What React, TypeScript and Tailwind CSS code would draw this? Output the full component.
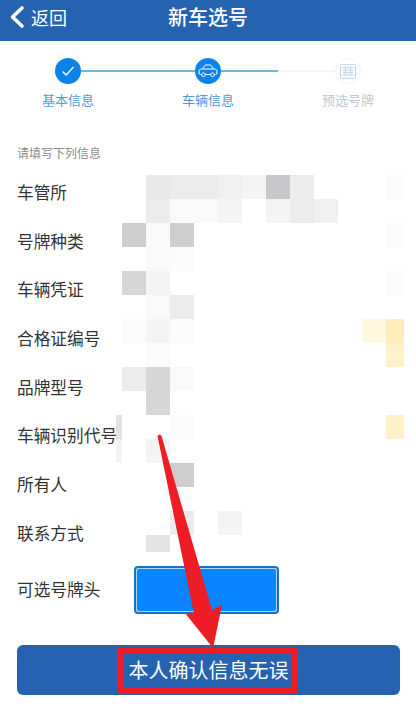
const cjk = "font-['Noto_Sans_CJK_SC','Liberation_Sans',sans-serif]"

const rows = ['车管所', '号牌种类', '车辆凭证', '合格证编号', '品牌型号', '车辆识别代号', '所有人', '联系方式']

// pixelated area, one string per 24px row, 12 columns
const tones: Record<string, string> = {
  a: 'bg-[#e9e9e9]',
  b: 'bg-[#ececec]',
  c: 'bg-[#f0f0f0]',
  d: 'bg-[#f4f4f4]',
  e: 'bg-[#f9f9f9]',
  f: 'bg-[#fbfbfb]',
  g: 'bg-[#c8c8ca]',
  h: 'bg-[#cecece]',
  i: 'bg-[#d6d6d6]',
  j: 'bg-[#e4e4e4]',
  k: 'bg-[#fff7de]',
  l: 'bg-[#ffeeb9]',
  m: 'bg-[#fff2c8]',
}
const mosaic = [
  '.abbcdgb...f',
  '.beed.dbc...',
  'heh........f',
  '.ef.........',
  'id.........f',
  '.eb.........',
  'fdf.......kl',
  '.f.........m',
  'bie.........',
  '.i..........',
  '..f........m',
  '.d..........',
  '..h.........',
  '............',
  '..b.d.......',
  '.j..........',
]

function Mosaic() {
  return (
    <div className="absolute left-[122px] top-[175px] grid h-[377px] grid-cols-[repeat(11,24px)_18px] auto-rows-[24px] overflow-hidden">
      {mosaic.flatMap((row, y) =>
        row.split('').map((c, x) => <div key={y + '-' + x} className={tones[c] ?? ''} />),
      )}
    </div>
  )
}

function Step({ label, active, children }: { label: string; active: boolean; children: React.ReactNode }) {
  return (
    <div className="flex flex-col items-center">
      <div
        className={
          active
            ? 'relative flex h-[26px] w-[26px] items-center justify-center rounded-full bg-[#0a84ea]'
            : 'relative flex h-[26px] w-[26px] items-center justify-center rounded-full border border-[#eaf3f9] bg-white'
        }
      >
        {children}
      </div>
      <span className={active ? 'mt-[6px] text-[13px] leading-[20px] text-[#4a9de0]' : 'mt-[6px] text-[13px] leading-[20px] text-[#bcc8d2]'}>
        {label}
      </span>
    </div>
  )
}

export default function App() {
  return (
    <div className={'relative h-[708px] w-[416px] overflow-hidden bg-white ' + cjk}>
      <header className="relative flex h-[41px] items-center justify-center bg-[#2563b0] text-white">
        <div className="absolute left-[8px] top-0 flex h-[34px] items-center gap-[6px]">
          <svg width="17" height="24" viewBox="0 0 17 24" fill="none" stroke="white" strokeWidth="3.6" strokeLinecap="round" strokeLinejoin="round">
            <path d="M14 3 L4.5 12 L14 21" />
          </svg>
          <span className="text-[18px] leading-none">返回</span>
        </div>
        <h1 className="-mt-[7px] text-[20px] font-medium leading-none">新车选号</h1>
      </header>

      <div className="relative -ml-[2px] grid w-[420px] grid-cols-[repeat(3,140px)] pt-[17px]">
        <div className="absolute left-[70px] top-[29px] h-[2px] w-[210px] bg-[#74b4da]" />
        <div className="absolute left-[280px] top-[29px] h-[2px] w-[60px] bg-[#f3f5f7]" />
        <Step label="基本信息" active>
          <svg width="14" height="12" viewBox="0 0 14 12" fill="none" stroke="white" strokeWidth="1.3">
            <path d="M1.5 6.5 L5.2 10 L12.5 2" />
          </svg>
        </Step>
        <Step label="车辆信息" active>
          <svg width="20" height="14" viewBox="0 0 20 14" fill="none" stroke="white" strokeWidth="1">
            <path d="M1 9 V7 Q1 5.6 2.6 5.2 L4.6 5 L6.4 2 Q7 1 8 1 H12 Q13 1 13.6 2 L15.4 5 L17.4 5.2 Q19 5.6 19 7 V9 Q19 10.5 17.5 10.5 H2.5 Q1 10.5 1 9 Z" />
            <path d="M4.6 5 H15.4" />
            <circle cx="5.5" cy="10.7" r="1.8" fill="#0a84ea" />
            <circle cx="14.5" cy="10.7" r="1.8" fill="#0a84ea" />
          </svg>
        </Step>
        <Step label="预选号牌" active={false}>
          <svg width="16" height="15" viewBox="0 0 16 15" fill="#f4f8fc" stroke="#c6d8e8" strokeWidth="1">
            <rect x="0.5" y="0.5" width="15" height="14" rx="1" />
            <path d="M3 3.5 H13 M3 6 H13 M3 8.5 H13 M3 11 H13 M5.5 3.5 V11 M10.5 3.5 V11" />
          </svg>
        </Step>
      </div>

      <div className="px-[17px]">
        <p className="mt-[34px] text-[12px] leading-[18px] text-[#8c8c8c]">请填写下列信息</p>
        <div className="mt-[6px] flex flex-col">
          {rows.map((r) => (
            <div key={r} className="flex h-[48.7px] items-center text-[16.7px] text-[#333333]">
              {r}
            </div>
          ))}
        </div>
        <div className="mt-[8px] flex items-center">
          <span className="w-[117px] text-[16.7px] text-[#333333]">可选号牌头</span>
          <div className="h-[48px] w-[145px] rounded-[4px] border-2 border-[#1f6fc0] bg-[#a8d8f5] p-px">
            <div className="h-full w-full rounded-[2px] bg-[#0a84ff]" />
          </div>
        </div>
        <button className="mt-[31px] flex h-[50px] w-[383px] items-center justify-center rounded-[6px] bg-[#2563b0] text-[20px] text-white">
          本人确认信息无误
        </button>
      </div>

      <Mosaic />
      <div className="absolute left-[116px] top-[415px] h-[24px] w-[6px] bg-[#e2e2e2]" />
      <div className="absolute left-[116px] top-[439px] h-[24px] w-[6px] bg-[#f2f2f2]" />

      {/* hand drawn annotation */}
      <svg className="absolute left-0 top-0" width="416" height="708" viewBox="0 0 416 708" fill="#ee1c25">
        <path d="M157.5 436 Q159.5 433 161.5 436 L212 610 L222 605 L213 648 L185 613 L194 614 Z" />
      </svg>
      <div className="absolute left-[118px] top-[648px] h-[46px] w-[180px] border-[6px] border-[#ee1c25]" />
    </div>
  )
}
